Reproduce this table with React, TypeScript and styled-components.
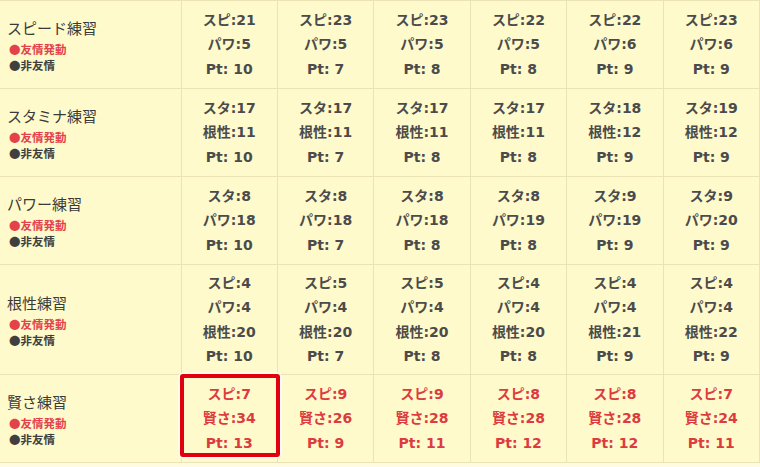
import React from "react";
import styled, { createGlobalStyle } from "styled-components";

const GlobalStyle = createGlobalStyle`
  html, body {
    margin: 0;
    padding: 0;
    background: #fffbe0;
  }
  body {
    font-family: "DejaVu Sans", "Noto Sans CJK JP", sans-serif;
  }
`;

type Training = {
  name: string;
  friend?: boolean;
  cells: string[][];
};

const trainings: Training[] = [
  {
    name: "スピード練習",
    cells: [
      ["スピ:21", "パワ:5", "Pt: 10"],
      ["スピ:23", "パワ:5", "Pt: 7"],
      ["スピ:23", "パワ:5", "Pt: 8"],
      ["スピ:22", "パワ:5", "Pt: 8"],
      ["スピ:22", "パワ:6", "Pt: 9"],
      ["スピ:23", "パワ:6", "Pt: 9"],
    ],
  },
  {
    name: "スタミナ練習",
    cells: [
      ["スタ:17", "根性:11", "Pt: 10"],
      ["スタ:17", "根性:11", "Pt: 7"],
      ["スタ:17", "根性:11", "Pt: 8"],
      ["スタ:17", "根性:11", "Pt: 8"],
      ["スタ:18", "根性:12", "Pt: 9"],
      ["スタ:19", "根性:12", "Pt: 9"],
    ],
  },
  {
    name: "パワー練習",
    cells: [
      ["スタ:8", "パワ:18", "Pt: 10"],
      ["スタ:8", "パワ:18", "Pt: 7"],
      ["スタ:8", "パワ:18", "Pt: 8"],
      ["スタ:8", "パワ:19", "Pt: 8"],
      ["スタ:9", "パワ:19", "Pt: 9"],
      ["スタ:9", "パワ:20", "Pt: 9"],
    ],
  },
  {
    name: "根性練習",
    cells: [
      ["スピ:4", "パワ:4", "根性:20", "Pt: 10"],
      ["スピ:5", "パワ:4", "根性:20", "Pt: 7"],
      ["スピ:5", "パワ:4", "根性:20", "Pt: 8"],
      ["スピ:4", "パワ:4", "根性:20", "Pt: 8"],
      ["スピ:4", "パワ:4", "根性:21", "Pt: 9"],
      ["スピ:4", "パワ:4", "根性:22", "Pt: 9"],
    ],
  },
  {
    name: "賢さ練習",
    friend: true,
    cells: [
      ["スピ:7", "賢さ:34", "Pt: 13"],
      ["スピ:9", "賢さ:26", "Pt: 9"],
      ["スピ:9", "賢さ:28", "Pt: 11"],
      ["スピ:8", "賢さ:28", "Pt: 12"],
      ["スピ:8", "賢さ:28", "Pt: 12"],
      ["スピ:7", "賢さ:24", "Pt: 11"],
    ],
  },
];

const Table = styled.table`
  width: 760px;
  border-collapse: collapse;
  table-layout: fixed;
  background: #fffacb;
`;

const Row = styled.tr`
  height: 88px;
`;

const LabelCell = styled.th`
  width: 181px;
  box-sizing: border-box;
  padding: 4px 7px;
  border: 1px solid #ebe2b6;
  border-left: none;
  text-align: left;
  vertical-align: middle;
  font-weight: normal;
`;

const Title = styled.div`
  font-family: "Noto Sans CJK JP", sans-serif;
  font-size: 15px;
  line-height: 22px;
  margin-bottom: 2px;
  color: #3a3a3a;
`;

const Legend = styled.div<{ $red?: boolean }>`
  font-family: "Noto Sans CJK JP", sans-serif;
  font-size: 11.5px;
  font-weight: bold;
  line-height: 16px;
  padding-left: 2px;
  color: ${(p) => (p.$red ? "#e3424a" : "#3f3f3f")};
`;

const DataCell = styled.td<{ $red?: boolean; $picked?: boolean }>`
  position: relative;
  padding: 6px 0;
  border: 1px solid #ebe2b6;
  text-align: center;
  vertical-align: middle;
  font-size: 14px;
  font-weight: bold;
  line-height: 24.25px;
  color: ${(p) => (p.$red ? "#dc3b3f" : "#4b4b4b")};

  &::after {
    content: "";
    display: ${(p) => (p.$picked ? "block" : "none")};
    position: absolute;
    top: -1px;
    left: -2px;
    right: -3px;
    bottom: 5px;
    border: 4px solid #e2000f;
    border-radius: 3px;
    box-shadow: 0 0 0 1.5px #ffffff;
    pointer-events: none;
  }
`;

const Line = styled.div`
  white-space: nowrap;
`;

export default function App() {
  return (
    <>
      <GlobalStyle />
      <Table>
        <colgroup>
          <col style={{ width: 181 }} />
          <col />
          <col />
          <col />
          <col />
          <col />
          <col />
        </colgroup>
        <tbody>
          {trainings.map((t) => (
            <Row key={t.name}>
              <LabelCell>
                <Title>{t.name}</Title>
                <Legend $red>●友情発動</Legend>
                <Legend>●非友情</Legend>
              </LabelCell>
              {t.cells.map((lines, i) => (
                <DataCell key={i} $red={t.friend} $picked={t.friend && i === 0}>
                  {lines.map((l) => (
                    <Line key={l}>{l}</Line>
                  ))}
                </DataCell>
              ))}
            </Row>
          ))}
        </tbody>
      </Table>
    </>
  );
}
